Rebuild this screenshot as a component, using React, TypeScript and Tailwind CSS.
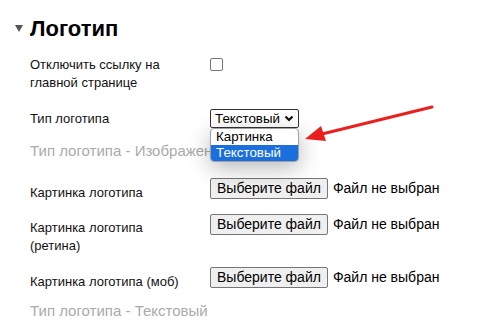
import { FC, ReactNode } from 'react'

const FileInput: FC = () => {
  return (
    <div className="flex items-center">
      <div className="h-[21px] px-[6px] flex items-center border border-[#767676] rounded-[2px] bg-[#efefef] text-[14px] text-black">
        Выберите файл
      </div>
      <span className="ml-[5px] text-[14px] text-black">Файл не выбран</span>
    </div>
  )
}

const Row: FC<{ label: ReactNode; labelTop: string; ctrlTop?: string; top: string; children: ReactNode }> = ({ label, labelTop, ctrlTop, top, children }) => {
  return (
    <div className={`flex flex-row ${top}`}>
      <div className={`w-[180px] pr-[20px] text-[13px] leading-[18px] text-[#111] ${labelTop}`}>{label}</div>
      <div className={ctrlTop}>{children}</div>
    </div>
  )
}

const App: FC = () => {
  return (
    <div className="relative w-[502px] h-[331px] bg-white overflow-hidden" style={{ fontFamily: '"Liberation Sans", Arial, sans-serif' }}>
      <div className="flex flex-col pl-[30px] pt-[15px]">
        <div className="relative flex items-center">
          <span className="absolute left-[-15px] top-[10px] w-0 h-0 border-l-[4px] border-r-[4px] border-t-[7px] border-l-transparent border-r-transparent border-t-[#555]" />
          <h2 className="text-[22px] leading-[28px] font-bold text-black">Логотип</h2>
        </div>

        <Row top="mt-[13px]" labelTop="mt-0" ctrlTop="mt-[2px]" label={<>Отключить ссылку на<br />главной странице</>}>
          <div className="w-[13px] h-[13px] border border-[#767676] rounded-[2px] bg-white" />
        </Row>

        <Row top="mt-[17px]" labelTop="mt-[1px]" label="Тип логотипа">
          <div className="h-[19px] w-[89px] flex items-center justify-between pl-[4px] pr-[4px] border border-[#333] rounded-[2px] bg-white text-[13.33px] text-black">
            <span>Текстовый</span>
            <svg width="10" height="7" viewBox="0 0 10 7"><polyline points="1.5,1.5 5,5 8.5,1.5" fill="none" stroke="#111" strokeWidth="2.2" /></svg>
          </div>
        </Row>

        {/* the open dropdown below lies over the end of this text, as in the screenshot */}
        <div className="mt-[14px] text-[15px] leading-[18px] text-[#aaa] whitespace-nowrap">Тип логотипа - Изображение</div>

        <Row top="mt-[18px]" labelTop="mt-[6px]" label="Картинка логотипа">
          <FileInput />
        </Row>

        <Row top="mt-[12px]" labelTop="mt-[5px]" label={<>Картинка логотипа<br />(ретина)</>}>
          <FileInput />
        </Row>

        <Row top="mt-[12px]" labelTop="mt-[6px]" label="Картинка логотипа (моб)">
          <FileInput />
        </Row>

        <div className="mt-[11px] text-[15px] leading-[18px] text-[#aaa]">Тип логотипа - Текстовый</div>
      </div>

      <div className="absolute left-[210px] top-[128px] w-[89px] flex flex-col border border-[#a0a0a0] rounded-[4px] bg-white shadow-[0_6px_22px_rgba(0,0,0,0.28)] overflow-hidden text-[13.33px]">
        <div className="h-[16px] leading-[16px] pl-[5px] text-black">Картинка</div>
        <div className="h-[16px] leading-[16px] pl-[5px] text-white bg-[#1a6fdc]">Текстовый</div>
      </div>

      <svg className="absolute left-0 top-0" width="502" height="331" viewBox="0 0 502 331">
        <line x1="432" y1="107" x2="322" y2="134" stroke="#e8211f" strokeWidth="3" strokeLinecap="round" />
        <polygon points="305,139 321,126 326,141" fill="#e8211f" />
      </svg>
    </div>
  )
}

export default App
